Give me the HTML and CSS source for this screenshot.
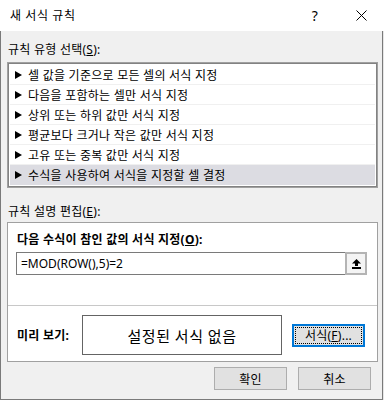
FILE: index.html
```html
<!DOCTYPE html>
<html lang="ko">
<head>
    <meta charset="UTF-8">
    <meta name="viewport" content="width=device-width, initial-scale=1.0">
    <title>새 서식 규칙</title>
    <link rel="stylesheet" href="styles.css">
</head>
<body>
    <div class="dialog">
        <div class="titlebar">
            <div class="title">새 서식 규칙</div>
            <div class="title-btn help">?</div>
            <div class="title-btn close">
                <svg width="11" height="11" viewBox="0 0 11 11">
                    <path d="M0.5 0.5 L10.5 10.5 M10.5 0.5 L0.5 10.5" stroke="#000" stroke-width="1" fill="none"/>
                </svg>
            </div>
        </div>

        <div class="dialog-body">
            <div class="label">규칙 유형 선택(<u>S</u>):</div>
            <ul class="rule-list">
                <li class="rule"><span class="arrow"></span>셀 값을 기준으로 모든 셀의 서식 지정</li>
                <li class="rule"><span class="arrow"></span>다음을 포함하는 셀만 서식 지정</li>
                <li class="rule"><span class="arrow"></span>상위 또는 하위 값만 서식 지정</li>
                <li class="rule"><span class="arrow"></span>평균보다 크거나 작은 값만 서식 지정</li>
                <li class="rule"><span class="arrow"></span>고유 또는 중복 값만 서식 지정</li>
                <li class="rule selected"><span class="arrow"></span>수식을 사용하여 서식을 지정할 셀 결정</li>
            </ul>

            <div class="label label-edit">규칙 설명 편집(<u>E</u>):</div>
            <div class="panel">
                <div class="panel-title">다음 수식이 참인 값의 서식 지정(<u>O</u>):</div>
                <div class="formula">
                    <span class="formula-text">=MOD(ROW(),5)=2</span>
                    <div class="ref-btn">
                        <svg width="9" height="10" viewBox="0 0 9 10">
                            <polygon points="4.5,0 9,4.5 6,4.5 6,7 3,7 3,4.5 0,4.5" fill="#000"/>
                            <rect x="0" y="8" width="9" height="2" fill="#000"/>
                        </svg>
                    </div>
                </div>
                <div class="separator"></div>
                <div class="preview-row">
                    <div class="preview-label">미리 보기:</div>
                    <div class="preview-box">설정된 서식 없음</div>
                    <div class="format-btn"><span class="focus">서식(<u>F</u>)...</span></div>
                </div>
            </div>

            <div class="actions">
                <div class="btn">확인</div>
                <div class="btn">취소</div>
            </div>
        </div>
    </div>
</body>
</html>
```

FILE: styles.css
```css
* {
    box-sizing: border-box;
}
body {
    margin: 0;
    padding: 0;
    font-family: "Noto Sans", "Noto Sans CJK KR", sans-serif;
    font-size: 12px;
    letter-spacing: 0.25px;
    color: #000;
    background-color: #e6e6e6;
}
u {
    text-underline-offset: 1px;
}
.dialog {
    width: 384px;
    height: 400px;
}
.titlebar {
    height: 31px;
    background: #fff;
    display: flex;
    align-items: center;
}
.title {
    flex: 1;
    padding-left: 10px;
    line-height: 16px;
    letter-spacing: 0.6px;
}
.title-btn {
    width: 46px;
    height: 31px;
    display: flex;
    align-items: center;
    justify-content: center;
}
.help {
    font-size: 14px;
}
.dialog-body {
    width: 383px;
    height: 369px;
    background: #f0f0f0;
    border: 1px solid #7a7a7a;
    border-top: 0;
    padding: 10px 4px 0 6px;
}
.label {
    line-height: 18px;
    padding-left: 1px;
}
.rule-list {
    list-style: none;
    margin: 3px 0 0 0;
    padding: 2px;
    background: #fff;
    border: 1px solid #a0a0a0;
    box-shadow: inset 0 0 0 1px #828282;
}
.rule {
    height: 20px;
    display: flex;
    align-items: center;
    padding-left: 5px;
    border-bottom: 1px solid #f0f0f0;
}
.rule:last-child {
    border-bottom: 0;
}
.rule.selected {
    background: #dcdce2;
}
.arrow {
    width: 0;
    height: 0;
    border-left: 7px solid #000;
    border-top: 4px solid transparent;
    border-bottom: 4px solid transparent;
    margin-right: 6px;
}
.label-edit {
    margin-top: 15px;
}
.panel {
    margin-top: 1px;
    background: #fff;
    border: 1px solid #a0a0a0;
    padding: 8px 10px 6px 8px;
}
.panel-title {
    font-weight: bold;
    line-height: 18px;
    padding-left: 1px;
}
.formula {
    margin-top: 3px;
    height: 23px;
    display: flex;
    border: 1px solid #7a7a7a;
    border-right: 0;
}
.formula-text {
    flex: 1;
    line-height: 21px;
    padding-left: 4px;
    letter-spacing: 0;
}
.ref-btn {
    width: 22px;
    margin-top: -1px;
    margin-bottom: -1px;
    border: 2px solid #b4b4b4;
    background: #f4f4f4;
    display: flex;
    align-items: center;
    justify-content: center;
    padding-top: 1px;
}
.separator {
    height: 1px;
    margin: 30px -10px 0 -8px;
    background: #c8c8c8;
}
.preview-row {
    margin-top: 9px;
    display: flex;
    align-items: center;
}
.preview-label {
    width: 66px;
    padding-left: 1px;
    font-weight: bold;
}
.preview-box {
    width: 200px;
    height: 40px;
    border: 1px solid #646464;
    display: flex;
    align-items: center;
    justify-content: center;
    font-size: 15px;
    letter-spacing: 0.5px;
}
.format-btn {
    margin-left: 10px;
    width: 73px;
    height: 23px;
    border: 2px solid #0078d7;
    background: #e1e1e1;
    padding: 1px;
}
.focus {
    display: flex;
    align-items: center;
    justify-content: center;
    height: 100%;
    border: 1px dotted #000;
}
.actions {
    margin-top: 5px;
    margin-right: 7px;
    display: flex;
    justify-content: flex-end;
    gap: 11px;
}
.btn {
    width: 73px;
    height: 23px;
    background: #e1e1e1;
    border: 1px solid #adadad;
    display: flex;
    align-items: center;
    justify-content: center;
}
```
